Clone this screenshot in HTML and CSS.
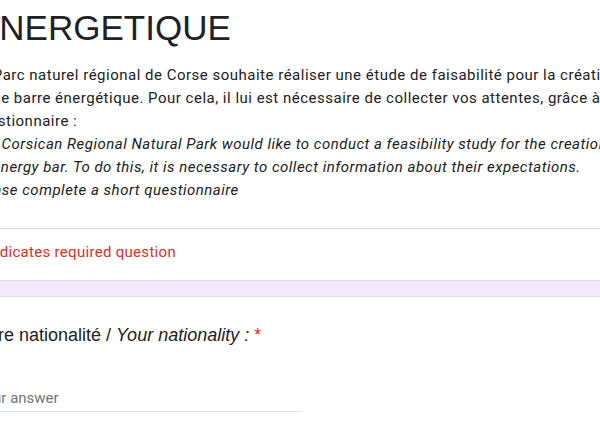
FILE: index.html
```html
<!DOCTYPE html>
<html lang="fr">
<head>
<meta charset="utf-8">
<title>Questionnaire</title>
<link rel="stylesheet" href="styles.css">
</head>
<body>
<div class="page">
  <section class="card card-header">
    <div class="head-main">
      <h1 class="form-title">ÉNERGETIQUE</h1>
      <p class="form-desc">Le Parc naturel régional de Corse souhaite réaliser une étude de faisabilité pour la création<br>d'une barre énergétique. Pour cela, il lui est nécessaire de collecter vos attentes, grâce à ce<br>questionnaire :<br><em>The Corsican Regional Natural Park would like to conduct a feasibility study for the creation of<br>an energy bar. To do this, it is necessary to collect information about their expectations.<br>Please complete a short questionnaire</em></p>
    </div>
    <div class="required-note">* Indicates required question</div>
  </section>
  <section class="card card-question">
    <div class="q-title">Votre nationalité / <em>Your nationality :</em> <span class="req">*</span></div>
    <div class="q-input"><span class="placeholder">Your answer</span></div>
  </section>
</div>
</body>
</html>
```

FILE: styles.css
```css
html, body {
  margin: 0;
  padding: 0;
}
body {
  width: 600px;
  height: 445px;
  overflow: hidden;
  background: #ffffff;
}
.page {
  margin-left: -48px;
  width: 1000px;
  display: flex;
  flex-direction: column;
  gap: 15px;
  background: #f0ebf8;
}
.card {
  background: #ffffff;
  border: 1px solid #dadce0;
  border-left: none;
  border-right: none;
}
.card-header {
  border-top: none;
}
.head-main {
  padding: 8px 24px 26px;
}
.form-title {
  margin: 0;
  font-family: "Liberation Sans", Arial, sans-serif;
  font-weight: 400;
  font-size: 35px;
  line-height: 40px;
  color: #202124;
}
.form-desc {
  margin: 16px 0 0 -4.5px;
  font-family: Roboto, "Liberation Sans", sans-serif;
  font-size: 15px;
  letter-spacing: 0.5px;
  line-height: 23px;
  color: #202124;
  white-space: nowrap;
}
.required-note {
  border-top: 1px solid #dadce0;
  padding: 13px 24px 18px;
  font-family: Roboto, "Liberation Sans", sans-serif;
  font-size: 15px;
  letter-spacing: 0.3px;
  line-height: 20px;
  color: #d93025;
}
.card-question {
  padding: 26px 24px 0;
  min-height: 200px;
}
.q-title {
  margin-left: -4px;
  font-family: "Liberation Sans", Arial, sans-serif;
  font-size: 18px;
  line-height: 24px;
  color: #202124;
}
.req {
  color: #d93025;
}
.q-input {
  margin-top: 41px;
  width: 326px;
  padding-bottom: 3px;
  border-bottom: 1px solid #e0e0e0;
  font-family: Roboto, "Liberation Sans", sans-serif;
  font-size: 15px;
  line-height: 20px;
}
.placeholder {
  color: #70757a;
}
```
